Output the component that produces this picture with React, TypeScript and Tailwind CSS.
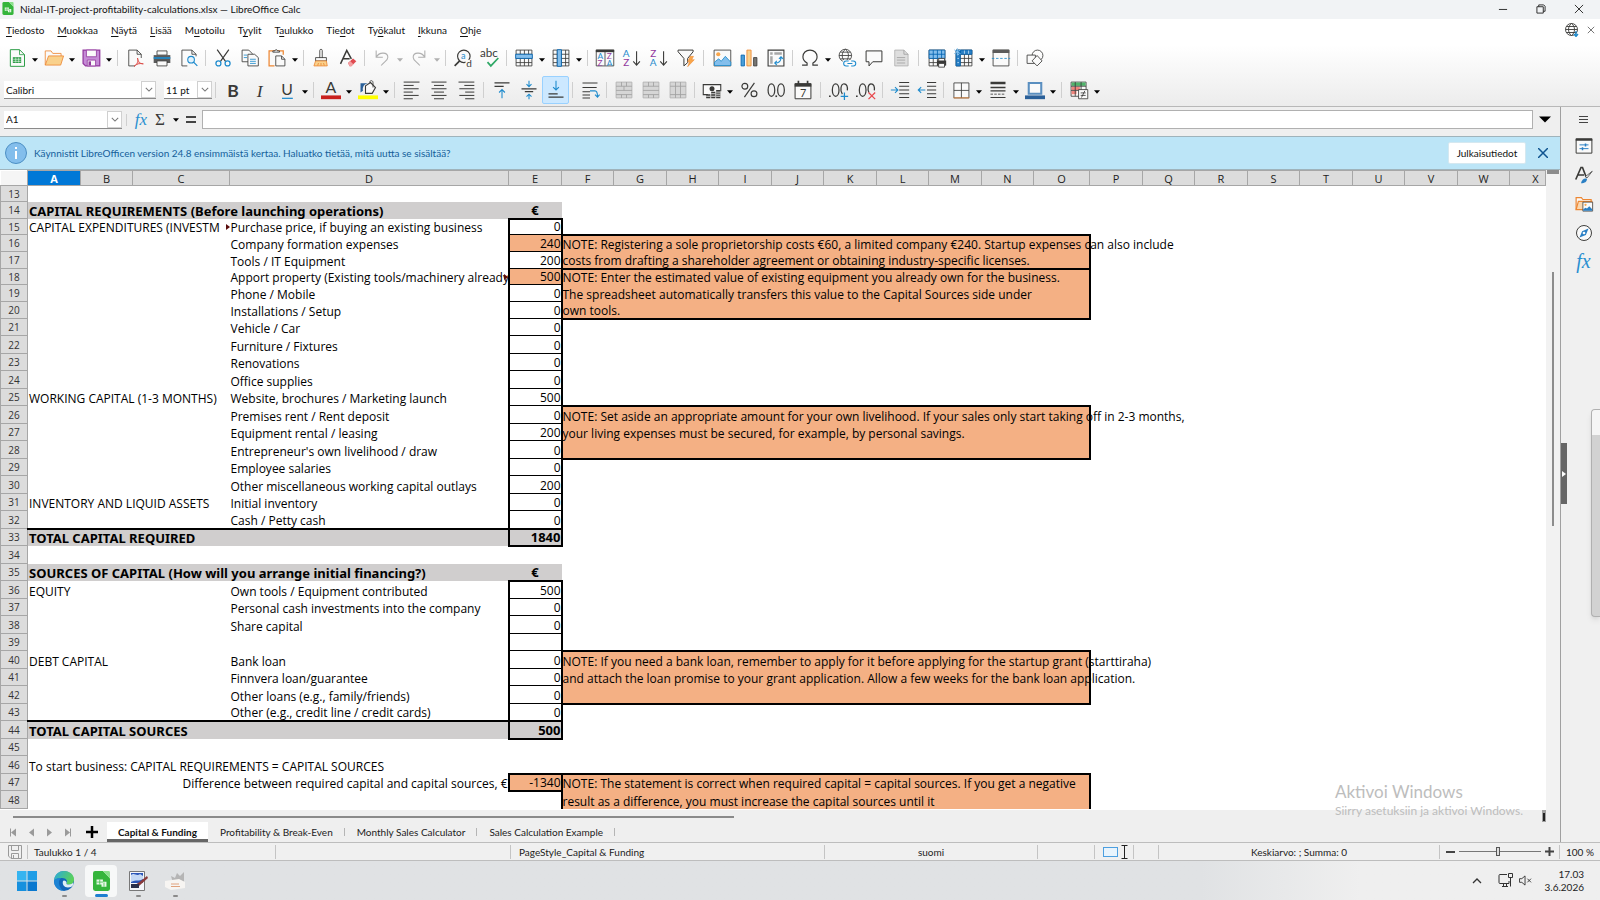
import type { ReactNode } from 'react'
import clsx from 'clsx'

const INK = '#3a3a38'
const BLUE = '#1e8bcd'
const ORANGE = '#ed8733'
const MUTED = '#b0b0b0'

const sheetLines = (
  <>
    <path d="M2.5 2.5h19v19h-19z" fill="#fafafa" stroke={INK} />
    <path d="M2.5 7.5h19M2.5 12.5h19M2.5 17.5h19M7.5 2.5v19M12.5 2.5v19M17.5 2.5v19" stroke={INK} />
  </>
)

const mergeBase = (inner: string) => (
  <>
    <path d="M2.5 2.5h19v19h-19z" fill="#d6d6d6" stroke={MUTED} />
    <path d={inner} stroke="#a0a0a0" />
  </>
)

const icons: Record<string, ReactNode> = {
  new: (
    <>
      <path d="M4 2h11l6 6v14H4z" fill="#fafafa" stroke="#2f9e49" strokeWidth="1.2" />
      <path d="M15 2v6h6" stroke="#2f9e49" />
      <path d="M7 11h10v7H7z" fill="#2f9e49" />
      <path d="M7.5 13.5h9M7.5 16h9M10.5 11.5v6M14 11.5v6" stroke="#dff3e3" strokeWidth=".8" />
    </>
  ),
  open: (
    <>
      <path d="M1.5 20.5V3.5h7l2 3h10v4" fill="#fafafa" stroke={ORANGE} />
      <path d="M1.5 20.5l4-11h18l-3.5 11z" fill="#f9d18c" stroke={ORANGE} />
    </>
  ),
  save: (
    <>
      <path d="M2.5 2.5h20v19h-17l-3-3z" fill="#c58bd6" stroke="#93399f" strokeWidth="1.5" />
      <path d="M6.5 2.5h12v8h-12z" fill="#fafafa" stroke="#93399f" />
      <path d="M7.5 14.5h10v7h-10z" fill="#fafafa" stroke="#93399f" />
      <path d="M9 16h3v5H9z" fill="#93399f" />
    </>
  ),
  pdf: (
    <>
      <path d="M12 21.5H4.5v-19h10l5 5V12" fill="#fafafa" stroke={INK} />
      <path d="M14.5 2.5v5h5" stroke={INK} />
      <path d="M11 22c4-3 5-6 4-10 1 5 3 7 7 7-4-1-8 0-11 3z" fill="#f7b4b4" stroke="#d8433f" />
    </>
  ),
  print: (
    <>
      <path d="M6 3.5h12v5H6z" fill="#fafafa" stroke={INK} />
      <path d="M2 8.5h20V18H2z" fill="#5b5b5b" />
      <path d="M2 11h20v2H2z" fill={BLUE} />
      <path d="M6 15.5h12v6H6z" fill="#fafafa" stroke={INK} />
    </>
  ),
  preview: (
    <>
      <path d="M10 21.5H3.5v-19h12l5 5V10" fill="#fafafa" stroke={INK} />
      <path d="M15.5 2.5v5h5" stroke={INK} />
      <circle cx="14.5" cy="14" r="4" fill="#e3f2fb" stroke={BLUE} strokeWidth="1.3" />
      <path d="M17.5 17l4.5 4.5" stroke={BLUE} strokeWidth="1.5" />
    </>
  ),
  cut: (
    <>
      <path d="M5 2l10 14M19 2L9 16" stroke={INK} strokeWidth="1.4" />
      <circle cx="6.5" cy="18.5" r="3" stroke={BLUE} strokeWidth="1.5" />
      <circle cx="17.5" cy="18.5" r="3" stroke={BLUE} strokeWidth="1.5" />
    </>
  ),
  copy: (
    <>
      <path d="M2.5 2.5h8l4 4v10h-12z" fill="#fafafa" stroke={INK} />
      <path d="M9.5 7.5h8l4.5 4v10H9.5z" fill="#fafafa" stroke={INK} />
      <path d="M4.5 8.5h4M4.5 11.5h4M12 13.5h7M12 16h7M12 18.5h7" stroke={BLUE} />
    </>
  ),
  paste: (
    <>
      <path d="M9 21.5H2.5v-18h17V8" fill="#fafafa" stroke={ORANGE} strokeWidth="1.5" />
      <path d="M7 5V3.5h2.5c0-2 3-2 3 0H15V5z" fill="#fafafa" stroke={INK} />
      <path d="M10.5 9.5h7l4 4v8h-11z" fill="#fafafa" stroke={INK} />
      <path d="M17.5 9.5v4h4" stroke={INK} />
    </>
  ),
  clone: (
    <>
      <path d="M10.5 12V3c0-2 3-2 3 0v9M5.5 11.5h13v4h-13z" fill="#fafafa" stroke={INK} />
      <path d="M5.5 15.5h13l1 6h-16z" fill="#f9d18c" stroke={ORANGE} />
      <path d="M8 21l1-3M12 21v-3M16 21l-1-3" stroke={ORANGE} />
    </>
  ),
  clear: (
    <>
      <path d="M3 19l7.5-16L16 13M6 13h8" stroke={INK} strokeWidth="1.8" />
      <path d="M12 18l6-5.5 4 3.5-6 6h-2z" fill="#e04b50" />
      <path d="M12 18l2.5-2.5 4 4L16 22h-2z" fill="#f39fa2" />
    </>
  ),
  undo: <path d="M5 3v8h8M5 11c4-7 14-6 14 0 0 4-4 5-8 10" stroke={MUTED} strokeWidth="1.3" />,
  redo: <path d="M19 3v8h-8M19 11C15 4 5 5 5 11c0 4 4 5 8 10" stroke={MUTED} strokeWidth="1.3" />,
  find: (
    <>
      <circle cx="13" cy="10" r="7.5" fill="#fafafa" stroke={INK} strokeWidth="1.4" />
      <path d="M8 15.5L2 21.5" stroke={INK} strokeWidth="2" />
      <path d="M15 14h8v9h-8z" fill="#fafafa" />
      <text x="9.5" y="13" fontSize="11" fill={BLUE}>a</text>
      <text x="16" y="23" fontSize="12" fill={INK}>d</text>
    </>
  ),
  spell: (
    <>
      <text x="0" y="11" fontSize="14" fill={INK}>abc</text>
      <path d="M9 17l4 4.5L22 12" stroke="#2fa866" strokeWidth="2" />
    </>
  ),
  row: (
    <>
      {sheetLines}
      <path d="M2 7.5h20v5H2z" fill="#83beec" stroke="#0063b1" />
    </>
  ),
  column: (
    <>
      {sheetLines}
      <path d="M7.5 2v20h5V2z" fill="#83beec" stroke="#0063b1" />
    </>
  ),
  sort: (
    <>
      <path d="M1.5 2.5h21v19h-21zM12 3v18" fill="#fafafa" stroke={INK} />
      <path d="M1 2h22v3H1z" fill={INK} />
      <text x="3" y="13" fontSize="10" fill={BLUE}>A</text>
      <text x="14" y="13" fontSize="10" fill="#93399f">Z</text>
      <text x="3" y="21.5" fontSize="10" fill="#93399f">Z</text>
      <text x="14" y="21.5" fontSize="10" fill={BLUE}>A</text>
    </>
  ),
  az: (
    <>
      <text x="1" y="10.5" fontSize="12" fill={BLUE}>A</text>
      <text x="1.5" y="22" fontSize="12" fill="#93399f">Z</text>
      <path d="M17.5 4v16M13.5 16l4 4.5 4-4.5" stroke={INK} strokeWidth="1.3" />
    </>
  ),
  za: (
    <>
      <text x="1.5" y="10.5" fontSize="12" fill="#93399f">Z</text>
      <text x="1" y="22" fontSize="12" fill={BLUE}>A</text>
      <path d="M17.5 4v16M13.5 16l4 4.5 4-4.5" stroke={INK} strokeWidth="1.3" />
    </>
  ),
  filter: (
    <>
      <path d="M2.5 2.5h18v2l-6.5 8v5l-4.5 4v-9l-7-8z" fill="#fafafa" stroke={INK} strokeWidth="1.2" />
      <path d="M17 10h4l-2 4h3l-8 8.5 2-6h-2z" fill="#f9a64a" stroke={ORANGE} strokeWidth=".6" />
    </>
  ),
  image: (
    <>
      <path d="M2.5 2.5h20v19h-20z" fill="#fafafa" stroke={INK} />
      <circle cx="7.5" cy="7.5" r="2.5" fill="#f9a64a" />
      <path d="M3 21v-4l5-4 3 3 5-6 6.5 7v4z" fill="#83beec" stroke={BLUE} />
    </>
  ),
  chart: (
    <>
      <path d="M2.5 8.5h4v13h-4z" fill="#4b9fd8" stroke="#0063b1" />
      <path d="M9.5 2.5h5v19h-5z" fill="#f9d18c" stroke={ORANGE} />
      <path d="M17.5 11.5h4v10h-4z" fill="#797774" stroke={INK} />
    </>
  ),
  pivot: (
    <>
      <path d="M2.5 2.5h19v19h-19z" fill="#fafafa" stroke={INK} strokeWidth="1.3" />
      <path d="M5 5h3v3H5zM10 5h9v3h-9zM5 10h3v9H5z" fill="#a8a8a8" />
      <path d="M11 18c5 0 7-2 7-7M15.5 13l2.5-2.5 2.5 2.5M13 15.5L10.5 18l2.5 2.5" stroke={BLUE} strokeWidth="1.3" />
    </>
  ),
  omega: (
    <path
      d="M2.5 20.5h6v-2.5C5 16 3.5 13.5 3.5 10.5 3.5 6 7 2.5 12 2.5S20.5 6 20.5 10.5c0 3-1.5 5.5-5 7.5v2.5h6"
      stroke={INK}
      strokeWidth="1.4"
    />
  ),
  link: (
    <>
      <circle cx="10" cy="9" r="7.5" stroke={INK} />
      <path d="M2.5 9h15M4 5h12M4 13h12M10 1.5c-5 4-5 11 0 15M10 1.5c5 4 5 11 0 15" stroke={INK} />
      <path d="M7 14.5h16v9H7z" fill="#fbfbfb" />
      <path d="M14 21.5h-3a3 3 0 010-6h3M17 15.5h2.5a3 3 0 010 6H17M12.5 18.5h6" stroke={BLUE} strokeWidth="1.3" />
    </>
  ),
  comment: <path d="M2.5 3.5h19v13h-11l-4.5 5v-5H2.5z" fill="#fafafa" stroke={INK} strokeWidth="1.2" />,
  footer: (
    <>
      <path d="M4.5 2.5h11l5 5v14h-16z" fill="#dedede" stroke={MUTED} />
      <path d="M15.5 2.5v5h5M7 11.5h10M7 14.5h10M7 18h10" stroke="#a0a0a0" />
    </>
  ),
  printArea: (
    <>
      {sheetLines}
      <path d="M2.5 2.5h19v10h-19z" fill="#83beec" stroke="#0063b1" />
      <path d="M2.5 7.5h19M7.5 2.5v10M12.5 2.5v10M17.5 2.5v10" stroke="#0063b1" />
      <path d="M12 15h11v6H12z" fill={INK} />
      <path d="M14 12.5h7v3h-7zM14 18.5h7v4.5h-7z" fill="#fafafa" stroke={INK} />
    </>
  ),
  freeze: (
    <>
      {sheetLines}
      <path d="M2.5 2.5h5v19h-5zM7.5 2.5h14v5h-14z" fill="#2a7fc4" stroke="#0063b1" />
      <path d="M4 7.5h2M4 12.5h2M4 17.5h2M12.5 3v4M17.5 3v4" stroke="#bfe0f6" />
      <path d="M4 0v9M0 2l8 5M8 2L0 7" stroke="#8cc8f2" />
    </>
  ),
  split: (
    <>
      <path d="M2.5 2.5h19v19h-19z" fill="#fafafa" stroke={INK} />
      <path d="M2 2h20v4H2z" fill="#5b5b5b" />
      <path d="M1 12.5h22" stroke={BLUE} strokeDasharray="3 2" />
    </>
  ),
  shapes: (
    <>
      <circle cx="15" cy="9" r="6.5" stroke={INK} />
      <path d="M2.5 8.5h10v10h-10z" stroke={INK} fill="#fafafa" />
      <path d="M14.5 9l6 6.5-6 6-6-6z" stroke={INK} fill="#fafafa" />
    </>
  ),
  bold: (
    <text x="5" y="20" fontSize="21" fontWeight="700" fill={INK}>B</text>
  ),
  italic: (
    <text x="8" y="20" fontSize="21" fontStyle="italic" fontFamily="Liberation Serif, serif" fill={INK}>I</text>
  ),
  underline: (
    <>
      <text x="5" y="18" fontSize="19" fill={INK}>U</text>
      <path d="M6 22h13" stroke={BLUE} strokeWidth="1.5" />
    </>
  ),
  fontColor: (
    <>
      <text x="5.5" y="16" fontSize="19" fill={INK}>A</text>
      <path d="M0 18.5h24v4.5H0z" fill="#c9211e" />
    </>
  ),
  highlight: (
    <>
      <path d="M9 7l6-4 6 6-4 7H9z" fill="#fafafa" stroke={INK} strokeWidth="1.3" />
      <path d="M14 3c0-3 4-3 4 0v6" stroke={INK} />
      <path d="M3 15V4h9c-5 1-7 5-6 9z" fill="#2a6099" />
      <path d="M0 18.5h24v4.5H0z" fill="#ffff00" />
    </>
  ),
  left: <path d="M2 2.5h19M2 6.5h12M2 10.5h18M2 14.5h11M2 18.5h18M2 22.5h11" stroke={INK} strokeWidth="1.2" />,
  center: <path d="M3 2.5h18M6 6.5h12M3 10.5h18M6 14.5h12M3 18.5h18M6 22.5h12" stroke={INK} strokeWidth="1.2" />,
  right: <path d="M3 2.5h19M10 6.5h12M4 10.5h18M11 14.5h11M4 18.5h18M11 22.5h11" stroke={INK} strokeWidth="1.2" />,
  top: (
    <>
      <path d="M3 3.5h18M3 7.5h11" stroke={INK} strokeWidth="1.5" />
      <path d="M12 22V11.5M8.5 15l3.5-3.5 3.5 3.5" stroke={BLUE} strokeWidth="1.3" />
    </>
  ),
  middle: (
    <>
      <path d="M3 10.5h18M7 14h10" stroke={INK} strokeWidth="1.5" />
      <path d="M12 1v7M9 5l3 3 3-3M12 23v-6M9 20l3-3 3 3" stroke={BLUE} strokeWidth="1.3" />
    </>
  ),
  bottom: (
    <>
      <path d="M3 16.5h11M3 20.5h18" stroke={INK} strokeWidth="1.5" />
      <path d="M12 1v11M8.5 8.5L12 12l3.5-3.5" stroke={BLUE} strokeWidth="1.3" />
    </>
  ),
  wrap: (
    <>
      <path d="M3 3.5h18M3 9h17M3 14h9M3 18h9M3 21.5h9" stroke={INK} strokeWidth="1.3" />
      <path d="M12 13h6c2 0 3 2 3 7M18 17.5l3 3 2.5-3" stroke={BLUE} strokeWidth="1.3" />
    </>
  ),
  merge: mergeBase('M2.5 7.5h19M2.5 12.5h19M2.5 17.5h19M9 2.5v5M15 2.5v5M9 17.5v4M15 17.5v4M12 7.5v5'),
  mergeCells: mergeBase('M2.5 7.5h19M2.5 12.5h19M2.5 17.5h19M9 2.5v5M15 2.5v5M9 17.5v4M15 17.5v4'),
  unmerge: mergeBase('M2.5 7.5h19M2.5 17.5h19M9 2.5v19M15 2.5v19'),
  currency: (
    <>
      <path d="M7 17.5H1.5v-12h21v8" fill="#fafafa" stroke={INK} strokeWidth="1.3" />
      <circle cx="12" cy="10.5" r="3" fill={INK} />
      <path d="M5 17h5v5H5zM11 14h5v8h-5zM17 12h5v10h-5z" fill={INK} />
      <path d="M5 19.5h5M11 16.5h5M11 19.5h5M17 14.5h5M17 17h5M17 19.5h5" stroke="#fafafa" />
    </>
  ),
  percent: (
    <>
      <circle cx="7" cy="7.5" r="3.5" stroke={INK} strokeWidth="1.4" />
      <circle cx="18" cy="16.5" r="3.5" stroke={INK} strokeWidth="1.4" />
      <path d="M18.5 3.5l-12 17" stroke={INK} strokeWidth="1.4" />
    </>
  ),
  number: (
    <>
      <ellipse cx="6.5" cy="12" rx="4" ry="7.5" stroke={INK} strokeWidth="1.5" />
      <ellipse cx="18" cy="12" rx="4" ry="7.5" stroke={INK} strokeWidth="1.5" />
      <path d="M11.3 18.5h2v2h-2z" fill={INK} />
    </>
  ),
  date: (
    <>
      <path d="M2.5 4.5h19v18h-19z" fill="#fafafa" stroke={INK} strokeWidth="1.2" />
      <path d="M2 4h20v4H2z" fill={INK} />
      <path d="M6.5 1v5M17.5 1v5" stroke={INK} strokeWidth="2" />
      <text x="8.5" y="20" fontSize="13" fill={INK}>7</text>
    </>
  ),
  addDecimal: (
    <>
      <path d="M0 18.5h2v2H0z" fill={INK} />
      <ellipse cx="8" cy="12" rx="4" ry="7.5" stroke={INK} strokeWidth="1.5" />
      <path d="M16 17c-3-4-2-12 2-12.5 3.5 0 4.5 4 4 8" stroke={INK} strokeWidth="1.5" />
      <path d="M18.5 15v9M14 19.5h9" stroke={BLUE} strokeWidth="1.5" />
    </>
  ),
  deleteDecimal: (
    <>
      <path d="M0 18.5h2v2H0z" fill={INK} />
      <ellipse cx="8" cy="12" rx="4" ry="7.5" stroke={INK} strokeWidth="1.5" />
      <path d="M15.5 15c-2-4-1-10.5 2.5-10.5 3.5 0 4.5 4 4 8" stroke={INK} strokeWidth="1.5" />
      <path d="M15 15l8 8M23 15l-8 8" stroke="#e8474c" strokeWidth="1.5" />
    </>
  ),
  indent: (
    <>
      <path d="M11 3h12M11 7.5h12M11 12h12M11 16.5h12M11 21h12" stroke={INK} strokeWidth="1.3" />
      <path d="M1 12h8M6 8.5L9.5 12 6 15.5" stroke={BLUE} strokeWidth="1.3" />
    </>
  ),
  outdent: (
    <>
      <path d="M12 3h11M12 7.5h11M12 12h11M12 16.5h11M12 21h11" stroke={INK} strokeWidth="1.3" />
      <path d="M1.5 12H10M5 8.5L1.5 12 5 15.5" stroke={BLUE} strokeWidth="1.3" />
    </>
  ),
  borders: (
    <>
      <path d="M3.5 3.5h18v18h-18zM12.5 3.5v18M3.5 12.5h18" stroke={INK} fill="#fafafa" />
      <path d="M3 21.5h19" stroke={ORANGE} />
    </>
  ),
  lineStyle: (
    <>
      <path d="M3 2h18v3H3zM3 8h18v2H3z" fill={INK} />
      <path d="M3 13h18M3 21h18" stroke={INK} strokeWidth="1.3" />
      <path d="M3 17h18" stroke={INK} strokeDasharray="3 1.5" />
    </>
  ),
  borderColor: (
    <>
      <path d="M4.5 3.5h15v13h-15z" fill="#fafafa" stroke="#5a8fc0" strokeWidth="2.5" />
      <path d="M0 18.5h24v4.5H0z" fill="#2a6099" />
    </>
  ),
  conditional: (
    <>
      <path d="M2.5 2.5h18v17h-18z" fill="#fafafa" stroke={INK} />
      <path d="M3 3h17v4H3z" fill="#4fb56a" />
      <path d="M3 8h10v4H3zM3 13h6v4H3z" fill="#f0847c" />
      <path d="M2.5 7.5h18M2.5 12.5h18M7.5 2.5v17M14.5 2.5v17" stroke={INK} />
      <path d="M11.5 11.5h11v11h-11z" fill="#fafafa" stroke={INK} />
      <path d="M14 15.5h6M14 18.5h6M19 13l-4 8" stroke={INK} />
    </>
  ),
  properties: (
    <>
      <path d="M1.5 2.5h21v19h-21z" fill="#fafafa" stroke={INK} strokeWidth="1.3" />
      <path d="M1 2h22v3H1z" fill={INK} />
      <path d="M6 10.5h12M6 15.5h12" stroke="#2a7fc4" strokeWidth="1.3" />
      <path d="M14 8.5v4M10 13.5v4" stroke="#2a7fc4" strokeWidth="2" />
    </>
  ),
  styles: (
    <>
      <path d="M1 18L8 2h2l5 13M4 12h8" stroke={INK} strokeWidth="2.2" />
      <path d="M23 7l-7 9-2-2z" fill="#fafafa" stroke={INK} />
      <path d="M8 23c1-5 4-7 8-6 0 4-3 6-8 6z" fill="#2a7fc4" />
    </>
  ),
  gallery: (
    <>
      <path d="M1.5 19.5v-16h7l2 2.5h11v4" fill="#fafafa" stroke={ORANGE} strokeWidth="1.6" />
      <path d="M1.5 19.5l3-11h18v11z" fill="#f9d7b0" stroke={ORANGE} strokeWidth="1.6" />
      <path d="M10.5 9.5h13v12h-13z" fill="#fafafa" stroke={INK} />
      <circle cx="14" cy="13" r="1.5" fill="#f9a64a" />
      <path d="M11 21v-2l3-2 2 1 3-3 4 4v2z" fill="#2a7fc4" />
    </>
  ),
  navigator: (
    <>
      <circle cx="12" cy="12" r="10" fill="#fafafa" stroke={INK} strokeWidth="1.3" />
      <path d="M18 6l-3.5 8.5L6 18l3.5-8.5z" fill="#2a7fc4" />
      <circle cx="12" cy="12" r="1.8" fill="#fafafa" />
    </>
  ),
}

function Icon({ name, className = 'size-5' }: { name: string; className?: string }) {
  return (
    <svg viewBox="0 0 24 24" fill="none" fontFamily="Lato, sans-serif" className={clsx('shrink-0 overflow-visible', className)}>
      {icons[name]}
    </svg>
  )
}

function Caret({ muted }: { muted?: boolean }) {
  return (
    <svg viewBox="0 0 10 6" className={clsx('h-1 w-[6px]', muted ? 'fill-[#b0b0b0]' : 'fill-black')}>
      <path d="M0 0h10L5 6z" />
    </svg>
  )
}

function Chevron() {
  return (
    <svg viewBox="0 0 10 6" className="h-[5px] w-2" fill="none" stroke="#777" strokeWidth="1.3">
      <path d="M1 1l4 4 4-4" />
    </svg>
  )
}

// '|' is a narrow separator, '||' a wide one, a trailing 'v' adds a drop-down arrow
const standardBar = [
  'new v', 'open v', 'save v', '|', 'pdf', 'print', 'preview', '|', 'cut', 'copy', 'paste v', '|', 'clone', 'clear', '|',
  'undo v', 'redo v', '|', 'find', 'spell', '|', 'row v', 'column v', '|', 'sort', 'az', 'za', 'filter', '||',
  'image', 'chart', 'pivot', '|', 'omega v', 'link', 'comment', 'footer', '||', 'printArea', 'freeze v', 'split', '|', 'shapes',
]

const formattingBar = [
  '|', 'bold', 'italic', 'underline v', '|', 'fontColor v', 'highlight v', '|', 'left', 'center', 'right', '||',
  'top', 'middle', 'bottom', '|', 'wrap', '|', 'merge', 'mergeCells', 'unmerge', '|', 'currency v', 'percent', 'number', 'date', '||',
  'addDecimal', 'deleteDecimal', '|', 'indent', 'outdent', '|', 'borders v', 'lineStyle v', 'borderColor v', '|', 'conditional v',
]

function Tools({ items }: { items: string[] }) {
  return items.map((item, i) => {
    if (item.startsWith('|')) {
      return (
        <div key={i} className={clsx('flex shrink-0 justify-center', item === '|' ? 'w-[7px]' : 'w-[9px]')}>
          <span className="h-4 w-px bg-[#cfcfcf]" />
        </div>
      )
    }
    const [name, arrow] = item.split(' ')
    const muted = name === 'undo' || name === 'redo'
    return (
      <div key={i} className="flex shrink-0 items-center">
        <button
          aria-label={name}
          className={clsx(
            'flex h-7 w-[27px] items-center justify-center rounded-xs',
            name === 'bottom' && 'border border-[#99d1ff] bg-[#cce8ff]',
          )}
        >
          <Icon name={name} />
        </button>
        {arrow && (
          <button aria-label={name + ' options'} className="flex h-7 w-[10px] items-center justify-center pt-[3px]">
            <Caret muted={muted} />
          </button>
        )}
      </div>
    )
  })
}

function Combo({ label, value, className }: { label: string; value: string; className: string }) {
  return (
    <div className={clsx('relative h-[18px] shrink-0 border-b border-[#8a8a8a] bg-white', className)}>
      <select aria-label={label} className="block h-full w-full appearance-none pl-[2px] outline-none">
        <option>{value}</option>
      </select>
      <span className="pointer-events-none absolute inset-y-0 right-0 flex w-[15px] items-center justify-center border border-[#d0d0d0] bg-white">
        <Chevron />
      </span>
    </div>
  )
}

const menus: [string, string, string][] = [
  ['', 'T', 'iedosto'],
  ['', 'M', 'uokkaa'],
  ['', 'N', 'äytä'],
  ['', 'L', 'isää'],
  ['M', 'u', 'otoilu'],
  ['T', 'y', 'ylit'],
  ['T', 'a', 'ulukko'],
  ['Tie', 'd', 'ot'],
  ['Ty', 'ö', 'kalut'],
  ['', 'I', 'kkuna'],
  ['', 'O', 'hje'],
]

function CalcLogo({ className }: { className: string }) {
  return (
    <svg viewBox="0 0 24 28" className={className}>
      <path d="M3 0h11l10 10v15a3 3 0 01-3 3H3a3 3 0 01-3-3V3a3 3 0 013-3z" fill="#35b53c" />
      <path d="M14 0l10 10V2a2 2 0 00-2-2z" fill="#8be08c" />
      <path d="M5 12h9v7H5zM12 15h7v7h-7z" fill="#e9f9e9" />
      <path d="M5 15.5h9M9.5 12v7M15.5 16v6" stroke="#35b53c" />
    </svg>
  )
}

function TitleBar() {
  return (
    <div className="flex h-[19px] items-center bg-[#f1f3f5] pb-[2px] pl-[2px]">
      <CalcLogo className="h-[13px] w-3" />
      <span className="pl-[6px]">Nidal-IT-project-profitability-calculations.xlsx — LibreOffice Calc</span>
      <div className="ml-auto flex items-center pr-4">
        {['M1 6h9', 'M1 3h7v7H1zM3 3V1h5.5L10 2.5V8H8', 'M1 1l9 9M10 1l-9 9'].map((d, i) => (
          <button key={d} aria-label={['Pienennä', 'Palauta', 'Sulje'][i]} className={clsx('flex', i > 0 && 'ml-7')}>
            <svg viewBox="0 0 11 11" className="size-[10px]" fill="none" stroke="#222">
              <path d={d} />
            </svg>
          </button>
        ))}
      </div>
    </div>
  )
}

function MenuBar() {
  return (
    <nav className="flex h-[23px] items-center gap-[13px] pb-[2px] pl-[6px]">
      {menus.map(([before, key, after]) => (
        <button key={before + key + after}>
          {before}
          <span className="underline underline-offset-2">{key}</span>
          {after}
        </button>
      ))}
      <div className="ml-auto flex items-center gap-2 pr-[5px]">
        <svg viewBox="0 0 14 14" className="size-[14px]" fill="none" stroke={INK} strokeWidth=".9">
          <circle cx="6.5" cy="6.5" r="6" />
          <path d="M.5 6.5h12M1.5 3.5h10M1.5 9.5h10M6.5.5c-4 3-4 9 0 12M6.5.5c4 3 4 9 0 12" />
          <path d="M11 8v5M9 11l2 2.5 2-2.5" stroke={BLUE} strokeWidth="1.3" />
        </svg>
        <button aria-label="Sulje asiakirja">
          <svg viewBox="0 0 10 10" className="size-2" fill="none" stroke="#555">
            <path d="M1 1l8 8M9 1L1 9" />
          </svg>
        </button>
      </div>
    </nav>
  )
}

function FormulaBar() {
  return (
    <div className="flex h-[29px] items-center bg-[#efefef] pb-[4px] pl-1">
      <Combo label="Nimikenttä" value="A1" className="w-[118px]" />
      <span className="ml-1 h-3 w-px bg-[#cfcfcf]" />
      <button className="ml-[6px] w-4 font-['Liberation_Serif',serif] text-[17px] leading-4 text-[#2a8fd0] italic">fx</button>
      <button className="ml-[3px] w-4 font-['Liberation_Serif',serif] text-[17px] leading-4 text-[#3a3a38]">Σ</button>
      <button aria-label="Funktiot" className="flex w-4 justify-center">
        <Caret />
      </button>
      <button aria-label="Kaava" className="ml-[2px] flex w-3 flex-col gap-[3px]">
        <span className="h-[2px] w-[10px] bg-[#444]" />
        <span className="h-[2px] w-[10px] bg-[#444]" />
      </button>
      <input aria-label="Syöttörivi" className="ml-1 h-[19px] min-w-0 flex-1 border border-[#b0b0b0] bg-white px-1 outline-none" />
      <button aria-label="Laajenna" className="mr-1 flex w-[23px] justify-center">
        <svg viewBox="0 0 12 6" className="h-[7px] w-3 fill-black">
          <path d="M0 0h12L6 6z" />
        </svg>
      </button>
    </div>
  )
}

function InfoBar() {
  return (
    <div className="flex h-[34px] items-center border-y border-[#9fb3bb] bg-[#bce5f7] pb-px pl-[5px]">
      <svg viewBox="0 0 22 22" className="size-[22px]">
        <circle cx="11" cy="11" r="10.5" fill="#83beec" stroke="#4c8fc4" />
        <path d="M10 9h2v8h-2zM10 5h2v2h-2z" fill="#fff" />
      </svg>
      <span className="pl-[7px] text-[#14609a]">
        Käynnistit LibreOfficen version 24.8 ensimmäistä kertaa. Haluatko tietää, mitä uutta se sisältää?
      </span>
      <button className="ml-auto h-[22px] w-[78px] rounded-xs border border-[#d5e8f0] bg-white">Julkaisutiedot</button>
      <button aria-label="Sulje tietopalkki" className="flex w-[34px] justify-center">
        <svg viewBox="0 0 10 10" className="size-[10px]" stroke="#0f5490" strokeWidth="1.5">
          <path d="M0 0l10 10M10 0L0 10" />
        </svg>
      </button>
    </div>
  )
}

type Row = {
  a?: string
  d?: string
  e?: string
  kind?: 'head' | 'total' | 'item' | 'diff'
  fill?: boolean
  note?: string
  edge?: 'top' | 'mid' | 'bottom'
}

const rows: Row[] = [
  {},
  { kind: 'head', a: 'CAPITAL REQUIREMENTS (Before launching operations)', e: '€' },
  { kind: 'item', a: 'CAPITAL EXPENDITURES (INVESTM', d: 'Purchase price, if buying an existing business', e: '0' },
  {
    kind: 'item', d: 'Company formation expenses', e: '240', fill: true, edge: 'top',
    note: 'NOTE: Registering a sole proprietorship costs €60, a limited company €240. Startup expenses can also include',
  },
  {
    kind: 'item', d: 'Tools / IT Equipment', e: '200', edge: 'bottom',
    note: 'costs from drafting a shareholder agreement or obtaining industry-specific licenses.',
  },
  {
    kind: 'item', d: 'Apport property (Existing tools/machinery already', e: '500', fill: true, edge: 'top',
    note: 'NOTE: Enter the estimated value of existing equipment you already own for the business.',
  },
  {
    kind: 'item', d: 'Phone / Mobile', e: '0', edge: 'mid',
    note: 'The spreadsheet automatically transfers this value to the Capital Sources side under',
  },
  { kind: 'item', d: 'Installations / Setup', e: '0', edge: 'bottom', note: 'own tools.' },
  { kind: 'item', d: 'Vehicle / Car', e: '0' },
  { kind: 'item', d: 'Furniture / Fixtures', e: '0' },
  { kind: 'item', d: 'Renovations', e: '0' },
  { kind: 'item', d: 'Office supplies', e: '0' },
  { kind: 'item', a: 'WORKING CAPITAL (1-3 MONTHS)', d: 'Website, brochures / Marketing launch', e: '500' },
  {
    kind: 'item', d: 'Premises rent / Rent deposit', e: '0', edge: 'top',
    note: 'NOTE: Set aside an appropriate amount for your own livelihood. If your sales only start taking off in 2-3 months,',
  },
  {
    kind: 'item', d: 'Equipment rental / leasing', e: '200', edge: 'mid',
    note: 'your living expenses must be secured, for example, by personal savings.',
  },
  { kind: 'item', d: "Entrepreneur's own livelihood / draw", e: '0', edge: 'bottom' },
  { kind: 'item', d: 'Employee salaries', e: '0' },
  { kind: 'item', d: 'Other miscellaneous working capital outlays', e: '200' },
  { kind: 'item', a: 'INVENTORY AND LIQUID ASSETS', d: 'Initial inventory', e: '0' },
  { kind: 'item', d: 'Cash / Petty cash', e: '0' },
  { kind: 'total', a: 'TOTAL CAPITAL REQUIRED', e: '1840' },
  {},
  { kind: 'head', a: 'SOURCES OF CAPITAL (How will you arrange initial financing?)', e: '€' },
  { kind: 'item', a: 'EQUITY', d: 'Own tools / Equipment contributed', e: '500' },
  { kind: 'item', d: 'Personal cash investments into the company', e: '0' },
  { kind: 'item', d: 'Share capital', e: '0' },
  { kind: 'item', d: '', e: '' },
  {
    kind: 'item', a: 'DEBT CAPITAL', d: 'Bank loan', e: '0', edge: 'top',
    note: 'NOTE: If you need a bank loan, remember to apply for it before applying for the startup grant (starttiraha)',
  },
  {
    kind: 'item', d: 'Finnvera loan/guarantee', e: '0', edge: 'mid',
    note: 'and attach the loan promise to your grant application. Allow a few weeks for the bank loan application.',
  },
  { kind: 'item', d: 'Other loans (e.g., family/friends)', e: '0', edge: 'bottom' },
  { kind: 'item', d: 'Other (e.g., credit line / credit cards)', e: '0' },
  { kind: 'total', a: 'TOTAL CAPITAL SOURCES', e: '500' },
  {},
  { a: 'To start business: CAPITAL REQUIREMENTS = CAPITAL SOURCES' },
  {
    kind: 'diff', a: 'Difference between required capital and capital sources, €', e: '-1340', fill: true, edge: 'top',
    note: 'NOTE: The statement is correct when required capital = capital sources. If you get a negative',
  },
  { edge: 'mid', note: 'result as a difference, you must increase the capital sources until it' },
]

function ClipMark() {
  return (
    <svg viewBox="0 0 4 6" className="absolute right-0 bottom-[5px] h-[6px] w-1 fill-[#5a0d0d]">
      <path d="M0 0l4 3-4 3z" />
    </svg>
  )
}

function SheetRow({ row, number }: { row: Row; number: number }) {
  const { kind } = row
  const wide = kind !== 'item'
  const shaded = kind === 'head' || kind === 'total'
  const bold = "bg-[#d0cece] pb-px font-['Noto_Sans',sans-serif] text-[13px] font-bold"
  return (
    <tr className={number > 20 && number % 2 === 0 ? 'h-[18px]' : [13, 15, 18].includes(number) ? 'h-4' : 'h-[17px]'}>
      <th className="border border-[#a6a6a6] bg-[#dcdcdc] p-0 text-center align-middle text-[10px] leading-[12px] font-normal text-[#333]">
        {number}
      </th>
      {wide ? (
        <td
          colSpan={4}
          className={clsx(
            'pl-px align-bottom',
            shaded && bold,
            kind === 'total' && 'border-t-2 border-black',
            kind === 'diff' && 'text-right',
          )}
        >
          {row.a}
        </td>
      ) : (
        <>
          <td colSpan={3} className="relative pl-px align-bottom">
            {row.a}
            {number === 15 && <ClipMark />}
          </td>
          <td className="relative pl-px align-bottom">
            {row.d}
            {number === 18 && <ClipMark />}
          </td>
        </>
      )}
      <td
        className={clsx(
          'align-bottom',
          shaded && bold,
          kind === 'head' && 'border-b-2 border-b-black text-center',
          kind === 'item' && 'border-x-2 border-b border-black text-right',
          kind === 'total' && 'border-2 border-black text-right',
          kind === 'diff' && 'border-2 border-black text-right',
          row.fill && 'bg-[#f4b084]',
        )}
      >
        {row.e}
      </td>
      {row.edge ? (
        <>
          <td
            colSpan={10}
            className={clsx(
              'border-x-2 border-black bg-[#f4b084] align-bottom',
              row.edge === 'top' && 'border-t-2',
              row.edge === 'bottom' && 'border-b-2',
            )}
          >
            {row.note}
          </td>
          <td colSpan={9} />
        </>
      ) : (
        <td colSpan={19} />
      )}
    </tr>
  )
}

const letters = 'ABCDEFGHIJKLMNOPQRSTUVWX'.split('')

function Sheet() {
  return (
    <div className="flex h-[640px]">
      <div className="min-w-0 flex-1 overflow-hidden bg-white">
        <table className="w-full table-fixed border-collapse font-['Open_Sans',sans-serif] text-[12px] leading-[14px] whitespace-nowrap text-black">
          <colgroup>
            <col className="w-[27px]" />
            <col className="w-[53px]" />
            <col className="w-[52px]" />
            <col className="w-[97px]" />
            <col className="w-[279px]" />
            {letters.slice(4, 14).map((l, i) => (
              <col key={l} className={i % 2 ? 'w-[52px]' : 'w-[53px]'} />
            ))}
            <col className="w-[56px]" />
            {letters.slice(15, 23).map((l, i) => (
              <col key={l} className={i % 2 ? 'w-[52px]' : 'w-[53px]'} />
            ))}
            <col />
          </colgroup>
          <thead>
            <tr className="h-[15px] text-[11px] leading-[13px]">
              <td className="bg-[#f5f5f5]" />
              {letters.map((l) => (
                <th
                  key={l}
                  className={clsx(
                    'border border-[#a6a6a6]',
                    l === 'A' ? 'bg-[#0078d7] font-bold text-white' : 'bg-[#dcdcdc] font-normal text-[#222]',
                    l === 'X' && 'pl-4',
                  )}
                >
                  {l}
                </th>
              ))}
            </tr>
          </thead>
          <tbody>
            {rows.map((row, i) => (
              <SheetRow key={i} row={row} number={i + 13} />
            ))}
          </tbody>
        </table>
      </div>
      <div className="flex w-[14px] flex-col items-center bg-[#f2f2f2]">
        <span className="h-1 w-3 bg-[#8d8d8d]" />
        <span className="mt-[98px] h-[254px] w-[2px] bg-[#8d8d8d]" />
      </div>
    </div>
  )
}

const tabs = ['Profitability & Break-Even', 'Monthly Sales Calculator', 'Sales Calculation Example']

function SheetTabs() {
  return (
    <div className="bg-[#efefef]">
      <div className="flex h-3 items-start justify-between pr-[14px] pl-[13px]">
        <span className="mt-[6px] h-[2px] w-[47%] bg-[#8a8a8a]" />
        <span className="flex h-3 w-1 justify-center bg-[#a0a0a0]">
          <span className="mt-[3px] h-2 w-[2px] bg-[#222]" />
        </span>
      </div>
      <div className="flex h-5 items-center pl-1">
        {['M6 0v8L1 4zM0 0h1v8H0z', 'M6 0v8L1 4z', 'M1 0v8l5-4z', 'M1 0v8l5-4zM6 0h1v8H6z'].map((d, i) => (
          <button key={d} aria-label={['Ensimmäinen', 'Edellinen', 'Seuraava', 'Viimeinen'][i]} className="flex w-[18px] justify-center">
            <svg viewBox="0 0 7 8" className="h-[9px] w-[7px] fill-[#9a9a9a]">
              <path d={d} />
            </svg>
          </button>
        ))}
        <button aria-label="Lisää taulukko" className="flex w-[31px] justify-center">
          <svg viewBox="0 0 12 12" className="size-3" stroke="#000" strokeWidth="2.5">
            <path d="M6 0v12M0 6h12" />
          </svg>
        </button>
        <button className="h-full w-[101px] bg-white font-bold shadow-[inset_0_-3px_#666]">Capital &amp; Funding</button>
        {tabs.map((tab) => (
          <button key={tab} className="flex items-center pl-3 text-[#222]">
            {tab}
            <span className="ml-[11px] h-2 w-px bg-[#b5b5b5]" />
          </button>
        ))}
      </div>
    </div>
  )
}

function Sidebar() {
  return (
    <aside className="relative flex w-10 flex-col items-center border-l border-[#a0a0a0] bg-[#f0f0f0] pl-[6px]">
      <button aria-label="Sivupalkin asetukset" className="flex h-6 flex-col justify-center gap-[2px]">
        <span className="h-px w-[9px] bg-[#444]" />
        <span className="h-px w-[9px] bg-[#444]" />
        <span className="h-px w-[9px] bg-[#444]" />
      </button>
      {['properties', 'styles', 'gallery', 'navigator'].map((name) => (
        <button key={name} aria-label={name} className="flex h-[29px] items-center">
          <Icon name={name} className="size-[18px]" />
        </button>
      ))}
      <button className="h-[29px] font-['Liberation_Serif',serif] text-[20px] leading-[29px] text-[#2a8fd0] italic">fx</button>
      <button
        aria-label="Piilota sivupalkki"
        className="absolute top-[336px] left-0 flex h-[61px] w-[6px] items-center justify-center bg-[#666]"
      >
        <svg viewBox="0 0 4 6" className="h-[6px] w-1 fill-white">
          <path d="M0 0l4 3-4 3z" />
        </svg>
      </button>
      <div className="absolute top-[302px] right-0 h-[208px] w-[9px] overflow-hidden rounded-l-sm border border-r-0 border-[#b0b0b0] bg-[#d2d2d2] shadow-md">
        <div className="h-[25px] bg-[#f5f5f5]" />
      </div>
    </aside>
  )
}

function StatusBar() {
  const cell = 'flex h-[14px] items-center border-l border-[#c4c4c4]'
  return (
    <footer className="flex h-[19px] items-center border-y border-[#bdbdbd] bg-[#f0f0f0] text-[#222]">
      <svg viewBox="0 0 14 14" className="mr-[5px] ml-2 size-[14px] shrink-0" fill="none" stroke="#9a9a9a">
        <path d="M.5.5h13v13H3l-2.5-2.5zM3.5.5v5h7v-5M3.5 13.5v-5h7v5M5.5 10v3" />
      </svg>
      <div className={clsx(cell, 'w-[248px] pl-[6px]')}>Taulukko 1 / 4</div>
      <div className={clsx(cell, 'w-[235px]')} />
      <div className={clsx(cell, 'flex-1 pl-2')}>PageStyle_Capital &amp; Funding</div>
      <div className={clsx(cell, 'w-[213px] justify-center')}>suomi</div>
      <div className={clsx(cell, 'w-[57px]')} />
      <div className={clsx(cell, 'w-[39px] gap-[3px] pl-2')}>
        <span className="h-[10px] w-[15px] border border-[#4c9fe0] bg-[#e8f4fd]" />
        <svg viewBox="0 0 7 14" className="h-[14px] w-[7px]" fill="none" stroke="#222">
          <path d="M.5.5h6M.5 13.5h6M3.5.5v13" />
        </svg>
      </div>
      <div className={clsx(cell, 'w-[25px]')} />
      <div className={clsx(cell, 'w-[281px] justify-center')}>Keskiarvo: ; Summa: 0</div>
      <div className={clsx(cell, 'w-[120px] gap-1 pl-[6px]')}>
        <button aria-label="Loitonna" className="h-[2px] w-[9px] bg-[#444]" />
        <input
          type="range"
          aria-label="Zoomaus"
          defaultValue={48}
          className="h-[10px] w-[82px] appearance-none bg-[linear-gradient(#777,#777)] bg-[length:100%_1px] bg-center bg-no-repeat [&::-webkit-slider-thumb]:h-[9px] [&::-webkit-slider-thumb]:w-1 [&::-webkit-slider-thumb]:appearance-none [&::-webkit-slider-thumb]:border [&::-webkit-slider-thumb]:border-[#555] [&::-webkit-slider-thumb]:bg-[#ddd]"
        />
        <button aria-label="Lähennä">
          <svg viewBox="0 0 9 9" className="size-[9px]" stroke="#444" strokeWidth="2">
            <path d="M4.5 0v9M0 4.5h9" />
          </svg>
        </button>
      </div>
      <div className={clsx(cell, 'w-[41px] justify-center')}>100 %</div>
    </footer>
  )
}

function Taskbar() {
  const app = 'relative flex h-8 w-8 items-center justify-center rounded-sm'
  const dot = 'absolute bottom-0 h-[2px] w-[5px] rounded-full bg-[#8a8a8a]'
  return (
    <div className="flex h-[39px] items-center bg-linear-to-r from-[#e0e2e4] from-75% to-[#efefef] to-85% pl-[11px]">
      <div className="flex gap-[5px]">
        <button aria-label="Käynnistä" className={app}>
          <svg viewBox="0 0 20 20" className="size-5">
            <path d="M0 0h9.5v9.5H0z" fill="#35b4f0" />
            <path d="M10.5 0H20v9.5h-9.5z" fill="#1f9de6" />
            <path d="M0 10.5h9.5V20H0z" fill="#1690de" />
            <path d="M10.5 10.5H20V20h-9.5z" fill="#0a78cf" />
          </svg>
        </button>
        <button aria-label="Edge" className={app}>
          <svg viewBox="0 0 20 20" className="size-5">
            <defs>
              <linearGradient id="swirl" x1="0" y1="0" x2="1" y2="0.4">
                <stop offset="0" stopColor="#2aa8e0" />
                <stop offset="1" stopColor="#5ad15a" />
              </linearGradient>
            </defs>
            <circle cx="10" cy="10" r="10" fill="#1266b8" />
            <path d="M0 9C1 3 5 0 10 0c6 0 10 4 10 8.5 0 3-2 5-5 5-2 0-3-.5-2.5-1.5C14 10 12 7 8.5 7 5 7 1 8 0 10z" fill="url(#swirl)" />
            <path d="M12.5 12c-.5 1 .5 1.5 2.5 1.5 1.8 0 3-.7 4-1.7l.5 2C18 16 16 16.5 14 16.5c-4 0-6-3-5-6.5.6-1.5 4 0 3.5 2z" fill="#e0eef5" />
            <path d="M0 10c1-2.5 4-3.5 7-3C4 9 4 15 9 19.9 4 19.5 0 15.5 0 10z" fill="#1c83d4" />
          </svg>
          <span className={dot} />
        </button>
        <button aria-label="LibreOffice Calc" className={clsx(app, 'bg-[#f7f8f8]')}>
          <CalcLogo className="h-5 w-[17px]" />
          <span className="absolute bottom-0 h-[3px] w-[13px] rounded-full bg-[#1f7fd0]" />
        </button>
        <button aria-label="Piirto-ohjelma" className={app}>
          <svg viewBox="0 0 20 20" className="size-5">
            <path d="M1.5.5h15v19h-15z" fill="#f4f6fa" stroke="#777" />
            <path d="M3 2h12v10H3z" fill="#2b56b8" />
            <path d="M3 4c4-3 5 2 9-1l3 2v3c-4 3-7 0-12 3z" fill="#c4d8f4" />
            <path d="M6 15c3-3 5-3 8-6l5-4 1 2-9 8z" fill="#8a3a3a" />
            <path d="M3 13h8v4H3z" fill="#2a2f4a" />
          </svg>
          <span className={dot} />
        </button>
        <button aria-label="Skanneri" className={app}>
          <svg viewBox="0 0 20 20" className="size-5">
            <path d="M6 5l4 2 2-5 3 3 4-4v11H8z" fill="#b5b5b5" />
            <path d="M0 10l14-2 6 3v6l-14 2-6-3z" fill="#f7f5f2" />
            <path d="M6 13h8M6 15.5h9" stroke="#e0a27c" />
          </svg>
          <span className={dot} />
        </button>
      </div>
      <div className="ml-auto flex items-center pr-4 text-[#222]">
        <svg viewBox="0 0 10 6" className="mr-4 h-[6px] w-[10px]" fill="none" stroke="#333" strokeWidth="1.3">
          <path d="M1 5l4-4 4 4" />
        </svg>
        <svg viewBox="0 0 15 15" className="mr-[6px] size-[15px]" fill="none" stroke="#333">
          <path d="M9 1.5H2a1 1 0 00-1 1v7a1 1 0 001 1h9V8M4 13.5h6M5.5 10.5v3M8.5 10.5v3M10.5.5h4v4h-4zM12.5 4.5v9" />
        </svg>
        <svg viewBox="0 0 14 12" className="mr-3 h-[11px] w-[13px]" fill="none" stroke="#333">
          <path d="M.5 4h2.5l3.5-3v10L3 8H.5zM9 4l4 4M13 4L9 8" />
        </svg>
        <div className="text-right leading-[13px]">
          <div>17.03</div>
          <div>3.6.2026</div>
        </div>
      </div>
    </div>
  )
}

export default function App() {
  return (
    <div className="min-h-screen overflow-hidden bg-[#efefef] font-['Lato','Open_Sans',sans-serif] text-[10px] leading-[12px] text-[#111]">
      <TitleBar />
      <div className="border-b border-[#b8b8b8] bg-linear-to-b from-white from-30% to-[#ececec]">
        <MenuBar />
        <div className="flex h-8 items-center pl-[3px]">
          <Tools items={standardBar} />
        </div>
        <div className="flex h-8 items-center pl-1">
          <Combo label="Fontin nimi" value="Calibri" className="w-[152px]" />
          <Combo label="Fonttikoko" value="11 pt" className="ml-2 w-12" />
          <Tools items={formattingBar} />
        </div>
      </div>
      <div className="flex">
        <main className="relative min-w-0 flex-1">
          <FormulaBar />
          <InfoBar />
          <Sheet />
          <SheetTabs />
          <div className="pointer-events-none absolute right-[31px] bottom-[23px] w-[194px] whitespace-nowrap text-[#bdbdbd]">
            <div className="text-[17px] leading-[22px]">Aktivoi Windows</div>
            <div className="text-[12px] leading-4">Siirry asetuksiin ja aktivoi Windows.</div>
          </div>
        </main>
        <Sidebar />
      </div>
      <StatusBar />
      <Taskbar />
    </div>
  )
}
